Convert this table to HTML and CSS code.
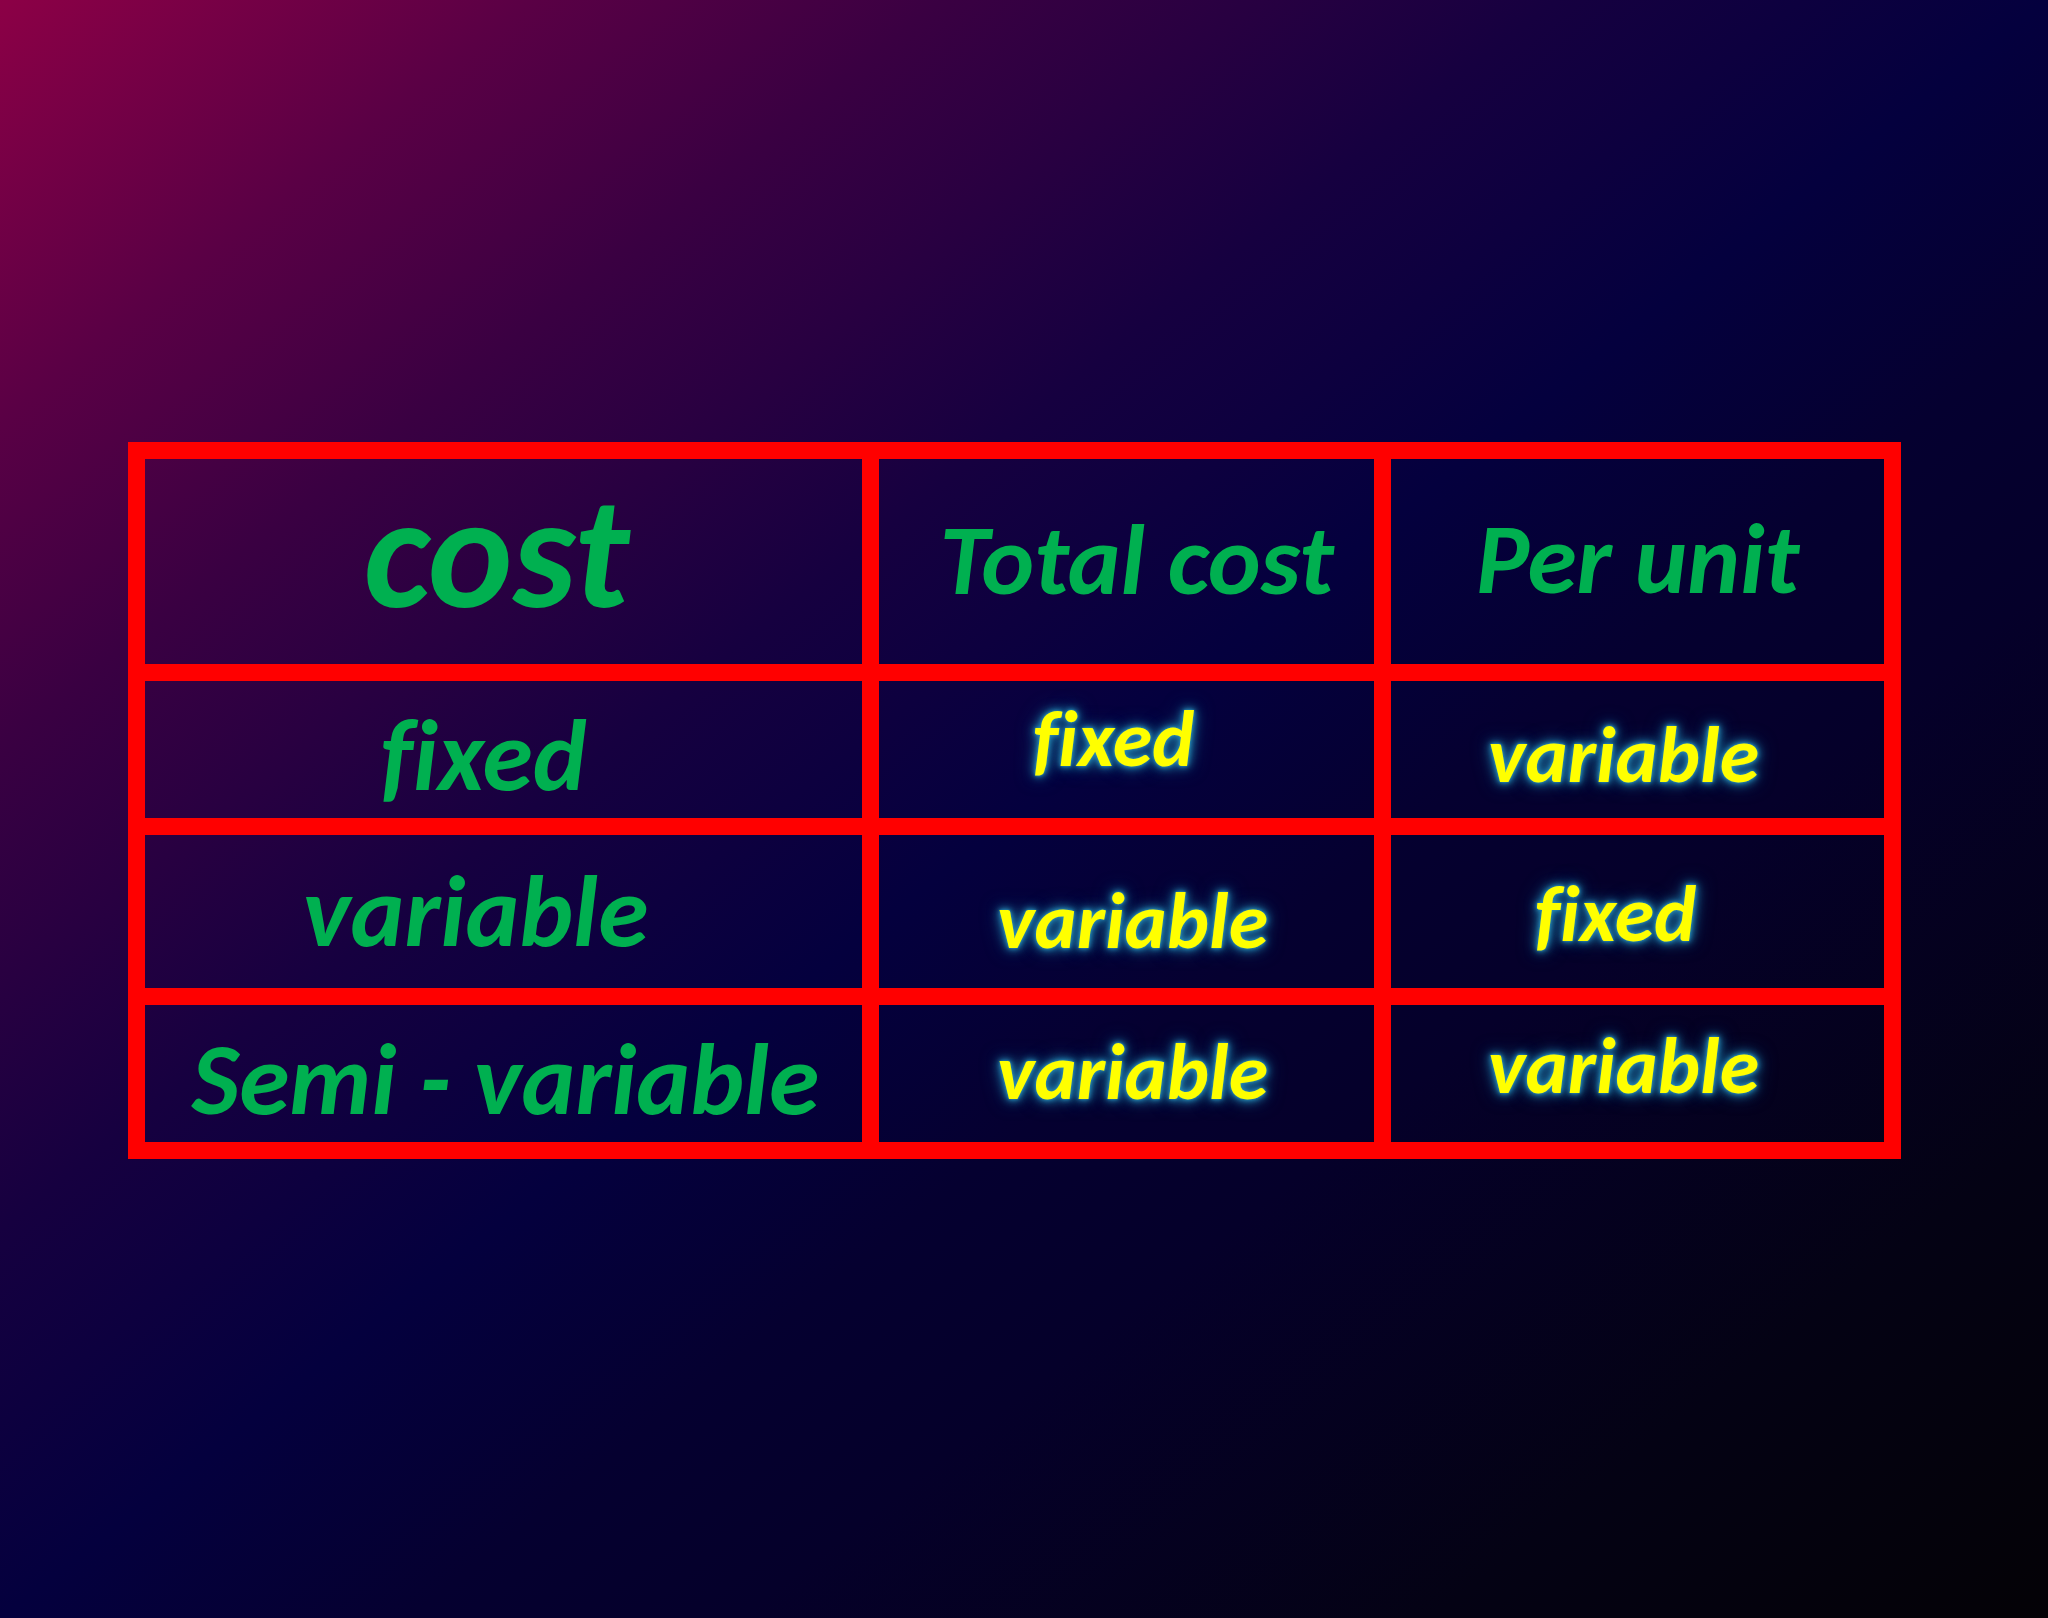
FILE: index.html
```html
<!DOCTYPE html>
<html lang="en">
<head>
<meta charset="utf-8">
<title>Cost behaviour</title>
<link rel="stylesheet" href="styles.css">
</head>
<body>
<main class="stage">
  <div class="grid">
    <div class="cell r1 a1"><span class="green huge">cost</span></div>
    <div class="cell r1 a2"><span class="green head">Total cost</span></div>
    <div class="cell r1 a3"><span class="green head">Per unit</span></div>

    <div class="cell r2 b1"><span class="green body">fixed</span></div>
    <div class="cell r2 b2"><span class="yellow">fixed</span></div>
    <div class="cell r2 b3"><span class="yellow">variable</span></div>

    <div class="cell r3 c1"><span class="green body">variable</span></div>
    <div class="cell r3 c2"><span class="yellow">variable</span></div>
    <div class="cell r3 c3"><span class="yellow">fixed</span></div>

    <div class="cell r4 d1"><span class="green body">Semi - variable</span></div>
    <div class="cell r4 d2"><span class="yellow">variable</span></div>
    <div class="cell r4 d3"><span class="yellow">variable</span></div>
  </div>
</main>
</body>
</html>
```

FILE: styles.css
```css
html, body {
  margin: 0;
  padding: 0;
}

body {
  width: 2048px;
  height: 1618px;
  overflow: hidden;
  background: linear-gradient(to bottom right,
    #8c0046 0%,
    #5a0045 13%,
    #3a0042 23%,
    #160040 38%,
    #04003e 50%,
    #050030 60%,
    #05002a 68%,
    #040214 85%,
    #040206 100%);
  font-family: "Carlito", "Open Sans", "Noto Sans", sans-serif;
  font-weight: 700;
  font-style: italic;
  font-variant-ligatures: none;
}

.stage {
  padding: 442px 0 0 128px;
}

.grid {
  display: grid;
  grid-template-columns: 734px 512px 510px;
  grid-template-rows: 222px 154px 170px 154px;
  width: 1756px;
  border-top: 17px solid #ff0000;
  border-left: 17px solid #ff0000;
  box-sizing: content-box;
}

.cell {
  border-right: 17px solid #ff0000;
  border-bottom: 17px solid #ff0000;
  text-align: center;
  line-height: 1;
  white-space: nowrap;
  box-sizing: border-box;
}

.green { color: #00b050; }

.huge { font-size: 160px; }
.head { font-size: 100px; }
.body { font-size: 102px; }

.yellow {
  color: #ffff00;
  font-size: 80px;
  text-shadow:
    0 0 2px #2a8cb8,
    0 0 5px #2a8cb8,
    0 0 9px #2080ac,
    0 0 13px #1a6a98,
    0 0 20px #124a78;
}

/* row 1 */
.a1 { padding: 14px 14px 0 0; }
.a2 { padding: 51px 0 0 20px; }
.a3 { padding: 50px 0 0 0; }

/* row 2 */
.b1 { padding: 23px 40px 0 0; }
.b2 { padding: 18px 26px 0 0; }
.b3 { padding: 34px 28px 0 0; }

/* row 3 */
.c1 { padding: 25px 56px 0 0; }
.c2 { padding: 46px 0 0 12px; }
.c3 { padding: 39px 44px 0 0; }

/* row 4 */
.d1 { padding: 23px 0 0 4px; }
.d2 { padding: 27px 0 0 12px; }
.d3 { padding: 21px 28px 0 0; }
```
